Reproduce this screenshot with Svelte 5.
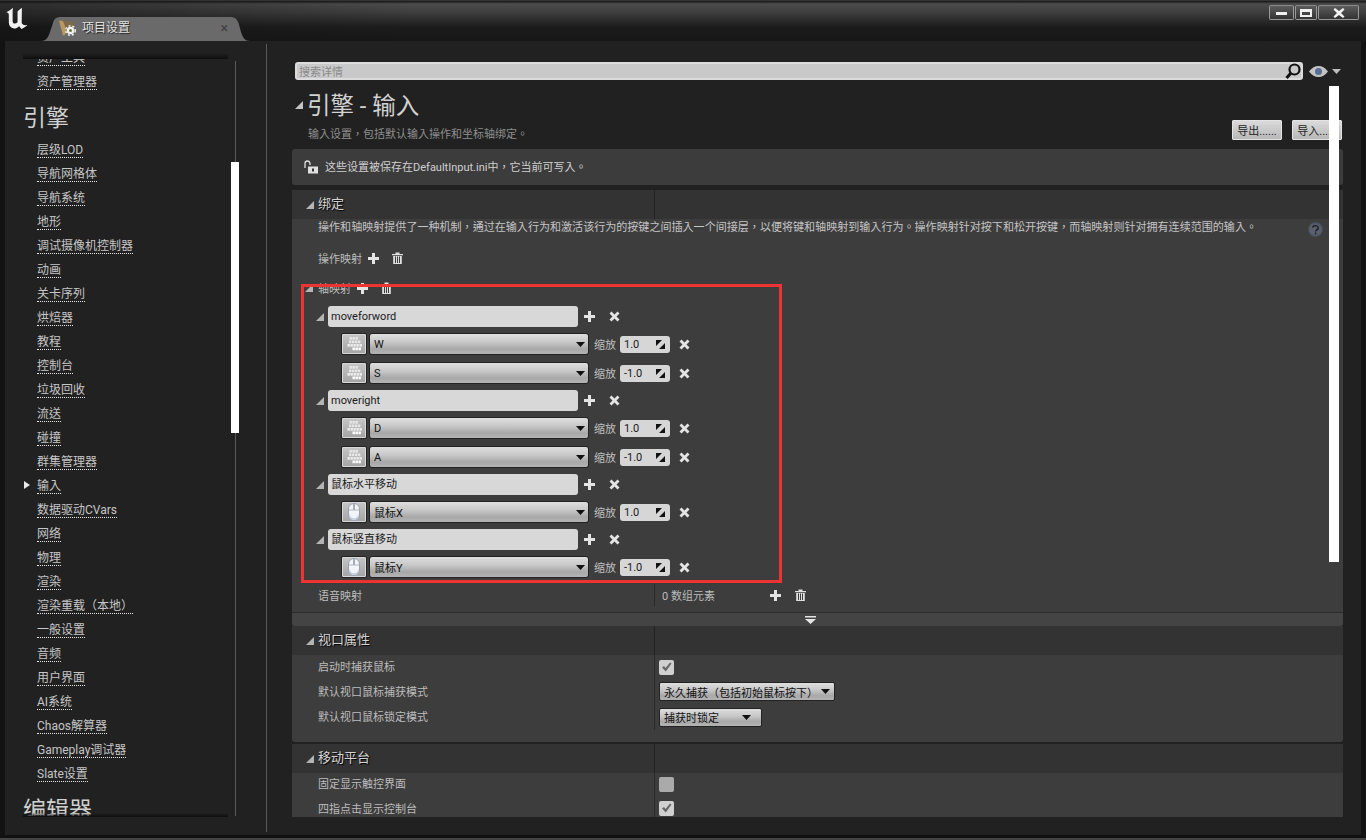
<script>
  const navItems = ['层级LOD','导航网格体','导航系统','地形','调试摄像机控制器','动画','关卡序列','烘焙器','教程','控制台','垃圾回收','流送','碰撞','群集管理器','输入','数据驱动CVars','网络','物理','渲染','渲染重载（本地）','一般设置','音频','用户界面','AI系统','Chaos解算器','Gameplay调试器','Slate设置'];
  const axes = [
    { name: 'moveforword', keys: [{ k: 'W', s: '1.0', t: 'kbd' }, { k: 'S', s: '-1.0', t: 'kbd' }] },
    { name: 'moveright', keys: [{ k: 'D', s: '1.0', t: 'kbd' }, { k: 'A', s: '-1.0', t: 'kbd' }] },
    { name: '鼠标水平移动', keys: [{ k: '鼠标X', s: '1.0', t: 'mouse' }] },
    { name: '鼠标竖直移动', keys: [{ k: '鼠标Y', s: '-1.0', t: 'mouse' }] }
  ];
  const kbdKeys = [
    [2.500,0,'#e6e6e6'],[5.500,0,'#e6e6e6'],[8.500,0,'#e6e6e6'],
    [2,3.500,'#e6e6e6'],[5,3.500,'#e6e6e6'],[8,3.500,'#e6e6e6'],[11,3.500,'#e6e6e6'],
    [0.500,7,'#ececec'],[3.500,7,'#ececec'],[6.500,7,'#ececec'],[9.500,7,'#ececec'],[12.500,7,'#ececec'],
    [5.500,10.500,'#ffffff'],[8.500,10.500,'#ffffff'],[11.500,10.500,'#ffffff']
  ];
</script>

{#snippet plus()}
  <svg class="ico" width="11" height="11" viewBox="0 0 11 11"><path d="M4 0h3v4h4v3H7v4H4V7H0V4h4z" fill="#e4e4e4"/></svg>
{/snippet}
{#snippet cross()}
  <svg class="ico" width="11" height="11" viewBox="0 0 11 11"><path d="M0.500 2.500l2-2 3 3 3-3 2 2-3 3 3 3-2 2-3-3-3 3-2-2 3-3z" fill="#e4e4e4"/></svg>
{/snippet}
{#snippet trash()}
  <svg class="ico" width="11" height="12" viewBox="0 0 11 12"><path d="M0 2h11v1.200H0zM3.500 0.500h4V2h-4zM1.200 4h8.600v8H1.200zM3 4.600v6.400h1V4.600zM5 4.600v6.400h1V4.600zM7 4.600v6.400h1V4.600z" fill="#e0e0e0" fill-rule="evenodd"/></svg>
{/snippet}
{#snippet tri()}
  <svg class="tri" width="8" height="8" viewBox="0 0 8 8"><path d="M8 0v8H0z" fill="#b4b4b4"/></svg>
{/snippet}
{#snippet arrow()}
  <svg class="arrow" width="9" height="5" viewBox="0 0 9 5"><path d="M0 0h9L4.500 5z" fill="#111"/></svg>
{/snippet}
{#snippet check(on)}
  <span class="check" class:on>
    {#if on}<svg width="11" height="10" viewBox="0 0 11 10"><path d="M1 5.500l2-1.500 1.600 2L9 0.500l1.500 1L4.800 9.500z" fill="#666"/></svg>{/if}
  </span>
{/snippet}

<div class="window">
  <header class="titlebar">
    <svg class="logo" width="24" height="24" viewBox="0 0 22 22">
      <path d="M1 5.500C3 5 4 4 7.500 1.500L7 4V14C7 16.500 9.500 16.800 11.500 15V5C12 4 14 2.500 15.500 1.500L15.300 15C15.300 17 17 18 20.500 17.500C19 19 17 20.500 15 21L13 18.500C11 20.500 9 21 7.500 20.500C5 20 3.500 18 3.500 15V8C3.500 6.500 2.500 6 1 5.500z" fill="#f2f2f2"/>
    </svg>
    <div class="tab">
      <svg class="tabshape" width="209" height="25" viewBox="0 0 209 25"><path d="M0 25C5 25 7 22 9 16L12 7C13 3 15 1 20 1H189C194 1 196 3 197.500 7L200 16C202 22 204 25 209 25z" fill="#6a6a6a"/></svg>
      <svg class="folder" width="17" height="17" viewBox="0 0 17 17">
        <path d="M0 1.500L6 1l2 2 6-1 1 9-9 4z" fill="#7d6a4a"/>
        <path d="M0 1.500l4 .5 3 8-1 6-2 .5z" fill="#b89a60"/>
        <circle cx="11.500" cy="11.500" r="3.800" fill="#f2f2f2"/>
        <circle cx="11.500" cy="11.500" r="4.800" fill="none" stroke="#f2f2f2" stroke-width="1.400" stroke-dasharray="2 2"/>
        <circle cx="11.500" cy="11.500" r="1.500" fill="#6a7a3a"/>
      </svg>
      <span class="tabtext">项目设置</span>
      <span class="tabx">×</span>
    </div>
    <div class="winbtns">
      <button class="wb min" aria-label="最小化"><i></i></button>
      <button class="wb max" aria-label="最大化"><i></i></button>
      <button class="wb close" aria-label="关闭"><svg width="12" height="10" viewBox="0 0 12 10"><path d="M0.500 1.500L2 0l4 3 4-3 1.500 1.500L8 5l3.500 3.500L10 10 6 7l-4 3-1.500-1.500L4 5z" fill="#f2f2f2"/></svg></button>
    </div>
  </header>

  <div class="body">
    <aside class="sidebar">
      <div class="navwrap">
        <nav class="nav">
          <div class="navlist">
            <div class="item"><span>资产工具</span></div>
            <div class="item"><span>资产管理器</span></div>
            <div class="heading">引擎</div>
            {#each navItems as it}
              <div class="item" class:active={it === '输入'}><span>{it}</span></div>
            {/each}
            <div class="heading">编辑器</div>
          </div>
        </nav>
        <div class="shade top"></div>
        <div class="shade bottom"></div>
      </div>
      <div class="navtrack"><div class="navthumb"></div></div>
    </aside>

    <main class="main">
      <div class="searchrow">
        <div class="search">
          <span>搜索详情</span>
          <svg width="18" height="18" viewBox="0 0 18 18"><circle cx="10.500" cy="7.500" r="5" fill="none" stroke="#111" stroke-width="2.200"/><path d="M7 11L2.500 16" stroke="#111" stroke-width="3"/></svg>
        </div>
        <svg class="eye" width="19" height="11" viewBox="0 0 19 11"><path d="M0 5.500C3 1.500 6 0 9.500 0S16 1.500 19 5.500C16 9.500 13 11 9.500 11S3 9.500 0 5.500z" fill="#c4c4c4"/><circle cx="9.500" cy="5.500" r="3.500" fill="#5a6d96"/></svg>
        <svg class="eyearrow" width="9" height="5" viewBox="0 0 9 5"><path d="M0 0h9L4.500 5z" fill="#bdbdbd"/></svg>
      </div>

      <div class="head">
        <div>
          <h1><svg width="8" height="8" viewBox="0 0 8 8"><path d="M8 0v8H0z" fill="#c4c4c4"/></svg>引擎 - 输入</h1>
          <p>输入设置，包括默认输入操作和坐标轴绑定。</p>
        </div>
        <div class="headbtns">
          <button>导出......</button>
          <button>导入......</button>
        </div>
      </div>

      <div class="banner">
        <svg width="15" height="14" viewBox="0 0 15 14"><path d="M1 8V3.500a2.500 2.500 0 0 1 5 0V5" fill="none" stroke="#e0e0e0" stroke-width="1.300"/><rect x="4" y="6.500" width="10" height="7" fill="#e0e0e0"/><rect x="8" y="8.500" width="2" height="3" fill="#333"/></svg>
        <span>这些设置被保存在DefaultInput.ini中，它当前可写入。</span>
      </div>

      <div class="scroller">
        <section class="panel bind">
          <div class="sechead"><div class="secname">{@render tri()}<span>绑定</span></div><div class="secright"></div></div>
          <div class="desc">
            <span>操作和轴映射提供了一种机制，通过在输入行为和激活该行为的按键之间插入一个间接层，以便将键和轴映射到输入行为。操作映射针对按下和松开按键，而轴映射则针对拥有连续范围的输入。</span>
            <svg class="help" width="15" height="15" viewBox="0 0 15 15"><circle cx="7.500" cy="7.500" r="6.500" fill="#59616e" stroke="#4d5766" stroke-width="1.500"/><path d="M4.800 5.800a2.700 2.300 0 1 1 3.800 2.200c-.7.400-1 .8-1 1.600M7.600 10.600v1.600" fill="none" stroke="#1c1c1c" stroke-width="1.400"/></svg>
          </div>
          <div class="maprow action"><span>操作映射</span>{@render plus()}{@render trash()}</div>
          <div class="maprow axis">{@render tri()}<span>轴映射</span>{@render plus()}{@render trash()}</div>
          <div class="tree">
            {#each axes as a}
              <div class="axisrow">
                {@render tri()}
                <div class="pill">{a.name}</div>
                {@render plus()}
                {@render cross()}
              </div>
              {#each a.keys as key}
                <div class="keyrow">
                  <button class="keybtn" aria-label="按键类型">
                    {#if key.t === 'kbd'}
                      <svg width="15" height="14" viewBox="0 0 15 14">
                        {#each kbdKeys as p}<rect x={p[0]} y={p[1]} width="2.400" height="2.700" fill={p[2]}/>{/each}
                      </svg>
                    {:else}
                      <svg width="12" height="18" viewBox="0 0 12 18"><rect x="0.500" y="0.500" width="11" height="17" rx="5.500" fill="#f2f4f8" stroke="#9aa2b2"/><path d="M1 7h10" stroke="#b4b8c2"/><path d="M6 1v6" stroke="#a7adb8" stroke-width="2"/><path d="M1 11c2 6 8 6 10 0v2c-2 5-8 5-10 0z" fill="#b8c4dc"/></svg>
                    {/if}
                  </button>
                  <div class="combo"><span>{key.k}</span>{@render arrow()}</div>
                  <span class="scale">缩放</span>
                  <div class="num">
                    <span>{key.s}</span>
                    <svg width="9" height="9" viewBox="0 0 9 9"><path d="M0 0h6L0 6zM9 9H3l6-6z" fill="#111"/></svg>
                  </div>
                  {@render cross()}
                </div>
              {/each}
            {/each}
          </div>
          <div class="voicerow">
            <div class="vleft">语音映射</div>
            <div class="vright"><span>0 数组元素</span>{@render plus()}{@render trash()}</div>
          </div>
          <div class="strip">
            <svg width="11" height="8" viewBox="0 0 11 8"><path d="M0 0h11v1.500H0zM0 3h11L5.500 8z" fill="#e4e4e4"/></svg>
          </div>
          <div class="redbox"></div>
        </section>

        <section class="panel viewport">
          <div class="sechead"><div class="secname">{@render tri()}<span>视口属性</span></div><div class="secright"></div></div>
          <div class="prop p1"><div class="pl">启动时捕获鼠标</div><div class="pr">{@render check(true)}</div></div>
          <div class="prop p2"><div class="pl">默认视口鼠标捕获模式</div><div class="pr"><div class="sel wide"><span>永久捕获（包括初始鼠标按下）</span>{@render arrow()}</div></div></div>
          <div class="prop p3"><div class="pl">默认视口鼠标锁定模式</div><div class="pr"><div class="sel narrow"><span>捕获时锁定</span>{@render arrow()}</div></div></div>
        </section>

        <section class="panel mobile">
          <div class="sechead"><div class="secname">{@render tri()}<span>移动平台</span></div><div class="secright"></div></div>
          <div class="prop m1"><div class="pl">固定显示触控界面</div><div class="pr">{@render check(false)}</div></div>
          <div class="prop m2"><div class="pl">四指点击显示控制台</div><div class="pr">{@render check(true)}</div></div>
        </section>
      </div>
      <div class="mainthumb"></div>
    </main>
  </div>
  <div class="footer"></div>
</div>

<style>
  :global(body) { margin: 0; background: #111; }
  .window {
    width: 1366px; height: 840px; display: flex; flex-direction: column; overflow: hidden;
    background: #121212;
    font: 11px Roboto, "Noto Sans CJK SC", sans-serif; color: #c4c4c4;
    text-spacing-trim: space-all;
  }
  .titlebar {
    height: 41px; flex: none; position: relative; box-sizing: border-box; padding: 5px 0 0 5px;
    border-top: 1px solid #333;
    background: linear-gradient(to right, rgba(18,18,18,.55), rgba(18,18,18,0) 30%), linear-gradient(to bottom, #151515 0, #4c4c4c 3px, #3c3c3c 12px, #1c1c1c 26px, #161616 100%);
    display: flex;
  }
  .logo { display: block; }
  .tab {
    position: absolute; left: 41px; bottom: 0; width: 209px; height: 25px;
    display: flex; align-items: center;
  }
  .tabshape { position: absolute; inset: 0; }
  .folder { position: relative; margin: 0 0 2px 18px; }
  .tabtext { position: relative; margin: 0 0 4px 6px; font-size: 12px; color: #e0e0e0; text-shadow: 1px 1px 1px #222; }
  .tabx { position: relative; margin: 0 22px 2px auto; color: #3e3e3e; font-size: 14px; }
  .winbtns { position: absolute; right: 7px; top: 4px; display: flex; gap: 1px; }
  .wb {
    height: 15px; padding: 0; box-sizing: border-box; display: flex; align-items: center; justify-content: center;
    background: linear-gradient(to bottom, #5c5c5c, #333); border: 1px solid #9a9a9a; border-top-color: #888; border-radius: 2px;
  }
  .min { width: 25px; }
  .max { width: 22px; }
  .close { width: 41px; }
  .min i { width: 11px; height: 3px; margin-top: 2px; background: #f0f0f0; display: block; }
  .max i { width: 8px; height: 3px; border: 2px solid #f0f0f0; border-top-width: 3px; display: block; }
  .body { flex: 1; min-height: 0; margin: 0 5px; background: #212121; display: flex; }
  .footer { height: 5px; flex: none; border-bottom: 2px solid #444; box-sizing: border-box; background: #111; }

  .sidebar {
    width: 261px; flex: none; box-sizing: border-box; position: relative;
    padding-top: 18px; display: flex;
    font-family: Roboto, "Noto Sans CJK TC", sans-serif;
  }
  .sidebar::after { content: ''; position: absolute; left: 261px; top: 3px; bottom: 3px; width: 1px; background: #5a5a5a; }
  .navwrap { width: 226px; height: 757px; position: relative; flex: none; }
  .nav { height: 100%; overflow: hidden; }
  .navlist { margin-top: -14px; padding-left: 32px; }
  .item { height: 24px; line-height: 24px; font-size: 12px; color: #c6c6c6; position: relative; white-space: nowrap; }
  .item span { display: inline-block; line-height: 14px; border-bottom: 1px dotted #e8e8e8; vertical-align: middle; margin-top: 2px; }
  .item.active::before {
    content: ''; position: absolute; left: -13px; top: 8px;
    border-left: 6px solid #e8e8e8; border-top: 4px solid transparent; border-bottom: 4px solid transparent;
  }
  .heading { height: 32px; line-height: 32px; margin: 10px 0 2px -14px; font-size: 23px; color: #d0d0d0; }
  .shade { position: absolute; left: 18px; right: 3px; }
  .shade.top { top: -6px; height: 6px; background: linear-gradient(to top, #0e0e0e, rgba(33,33,33,0)); }
  .shade.bottom { bottom: -1px; height: 4px; background: linear-gradient(to top, #0e0e0e, rgba(33,33,33,0)); }
  .navtrack { width: 1px; height: 755px; margin: 2px 0 0 4px; background: #5a5a5a; position: relative; }
  .navthumb { position: absolute; left: -4px; top: 101px; width: 8px; height: 271px; background: #fff; }

  .main { flex: 1; min-width: 0; position: relative; padding: 21px 18px 0 26px; box-sizing: border-box; }
  .searchrow { height: 18px; display: flex; align-items: center; padding-left: 3px; }
  .search {
    width: 1008px; height: 18px; box-sizing: border-box; flex: none;
    background: #c9c9c9; border: 2px solid #dcdcdc; border-radius: 3px;
    display: flex; align-items: center; justify-content: space-between; color: #8a8a8a; font-size: 11px; padding-left: 2px;
  }
  .search svg { margin-right: -1px; }
  .eye { margin-left: 6px; }
  .eyearrow { margin-left: 4px; }
  .head { height: 69px; display: flex; justify-content: space-between; }
  h1 { margin: 11px 0 0 3px; height: 30px; line-height: 30px; font-size: 23.500px; font-weight: 400; color: #d2d2d2; display: flex; align-items: center; gap: 4px; }
  h1 svg { margin-bottom: 2px; }
  .head p { margin: 6px 0 0 16px; font-size: 11px; line-height: 16px; color: #8e8e8e; font-family: Roboto, "Noto Sans CJK TC", sans-serif; }
  .headbtns { display: flex; gap: 10px; padding-top: 40px; margin-right: 1px; }
  .headbtns button {
    width: 50px; height: 20px; padding: 0; font: 11px Roboto, "Noto Sans CJK SC", sans-serif; color: #222; overflow: hidden; white-space: nowrap;
    background: linear-gradient(to bottom, #dadada, #b8b8b8); border: 1px solid #e4e4e4; border-radius: 1px;
  }
  .banner {
    height: 36px; display: flex; align-items: center; gap: 6px; padding-left: 12px; box-sizing: border-box;
    background: #3c3c3c; border-radius: 3px; font-size: 11px; color: #d0d0d0;
    font-family: Roboto, "Noto Sans CJK TC", sans-serif;
  }
  .banner span { margin-bottom: 2px; }
  .scroller { margin-top: 5px; height: 627px; overflow: hidden; }
  .panel { background: #3d3d3d; border-radius: 3px; position: relative; }
  .sechead { display: grid; grid-template-columns: 362px 1fr; background: #333; height: 29px; }
  .secname { display: flex; align-items: center; padding: 0 0 0 14px; font-size: 13px; color: #d4d4d4; text-shadow: 1px 1px 1px #000; }
  .secname span { margin: 0 0 4px 4px; }
  .secright { border-left: 1px solid #222; }
  .tri { flex: none; display: block; }
  .ico { flex: none; display: block; }
  .arrow { flex: none; display: block; }
  .desc { height: 21px; padding: 0 20px 0 26px; display: flex; justify-content: space-between; font-size: 11.050px; line-height: 17px; color: #c4c4c4; white-space: nowrap; font-family: Roboto, "Noto Sans CJK TC", sans-serif; }
  .help { margin-top: 3px; }
  .maprow { height: 24px; display: flex; align-items: center; margin-top: 6px; color: #bcbcbc; }
  .action { padding-left: 26px; }
  .action .ico:nth-of-type(1) { margin-left: 6px; }
  .action .ico:nth-of-type(2) { margin-left: 13px; }
  .axis { padding-left: 13px; }
  .axis > span { margin-left: 5px; }
  .axis .ico:nth-of-type(2) { margin-left: 6px; }
  .axis .ico:nth-of-type(3) { margin-left: 13px; }
  .tree { display: flex; flex-direction: column; gap: 6px; margin-top: 6px; }
  .axisrow { height: 21px; display: flex; align-items: center; padding-left: 24px; }
  .axisrow .pill { margin-left: 4px; margin-right: 6px; }
  .axisrow .ico:last-child { margin-left: 14px; }
  .pill {
    width: 250px; height: 21px; line-height: 21px; flex: none; box-sizing: border-box; padding-left: 3px;
    background: #d8d8d8; border-radius: 3px; color: #1a1a1a; font-size: 11px;
  }
  .keyrow { height: 22px; display: flex; align-items: center; padding-left: 49px; }
  .keyrow + .keyrow { margin-top: 1px; }
  .keybtn {
    width: 26px; height: 22px; padding: 0; flex: none; box-sizing: border-box;
    display: flex; align-items: center; justify-content: center;
    background: linear-gradient(to bottom, #c6c6c6, #a4a4a4); border: 1px solid #222; border-radius: 2px;
    box-shadow: inset 0 0 0 1px #d8d8d8;
  }
  .combo {
    width: 220px; height: 22px; margin-left: 2px; flex: none; box-sizing: border-box; padding: 0 3px 0 4px;
    display: flex; align-items: center; justify-content: space-between;
    background: linear-gradient(to bottom, #dedede, #c8c8c8 40%, #a8a8a8 75%, #b4b4b4);
    border: 1px solid #222; border-radius: 3px; color: #111; font-size: 11px;
  }
  .scale { margin-left: 5px; width: 21px; flex: none; color: #c0c0c0; font-size: 11px; white-space: nowrap; }
  .num {
    width: 50px; height: 17px; margin-left: 5px; margin-right: 9px; flex: none; box-sizing: border-box; padding: 0 5px 0 4px;
    display: flex; align-items: center; justify-content: space-between;
    background: #d6d6d6; border-radius: 3px; color: #1a1a1a; font-size: 11px;
  }
  .voicerow { display: grid; grid-template-columns: 362px 1fr; height: 22px; margin-top: 6px; align-items: stretch; }
  .vleft { padding: 2px 0 0 26px; line-height: 22px; height: 20px; color: #bcbcbc; }
  .vright { border-left: 1px solid #2a2a2a; padding-left: 7px; display: flex; align-items: center; color: #bcbcbc; }
  .vright .ico:nth-of-type(1) { margin-left: 55px; }
  .vright .ico:nth-of-type(2) { margin-left: 14px; }
  .strip {
    margin-top: 6px; height: 14px; box-sizing: border-box; border-top: 1px solid #2c2c2c;
    display: flex; justify-content: center; align-items: center; background: #444; padding-right: 15px;
    border-radius: 0 0 3px 3px;
  }
  .redbox {
    position: absolute; left: 9px; top: 94px; width: 481px; height: 299px; box-sizing: border-box;
    border: 3px solid #ee3333; pointer-events: none;
  }
  .viewport { padding-bottom: 12px; margin-bottom: 2px; }
  .prop { display: grid; grid-template-columns: 362px 1fr; align-items: stretch; }
  .p1 { height: 24px; } .p2 { height: 25px; } .p3 { height: 26px; }
  .m1 { height: 23px; } .m2 { height: 24px; }
  .pl { padding: 0 0 2px 26px; display: flex; align-items: center; color: #bcbcbc; font-size: 11px; }
  .m1 .pl { padding-bottom: 4px; }
  .m2 .pl { padding-bottom: 0; }
  .pr { border-left: 1px solid #2a2a2a; padding-left: 4px; display: flex; align-items: center; }
  .check {
    width: 15px; height: 15px; box-sizing: border-box; border-radius: 2px; background: #aaa;
    display: flex; align-items: center; justify-content: center;
  }
  .check.on { background: #d0d0d0; }
  .sel {
    height: 19px; box-sizing: border-box; display: flex; align-items: center; justify-content: space-between; padding: 0 4px 0 4px;
    background: linear-gradient(to bottom, #dedede, #c8c8c8 40%, #a8a8a8 75%, #b4b4b4);
    border: 1px solid #222; border-radius: 2px; color: #111; font-size: 11px; white-space: nowrap;
    font-family: Roboto, "Noto Sans CJK TC", sans-serif;
  }
  .sel.wide { width: 176px; }
  .sel.narrow { width: 103px; }
  .sel.narrow .arrow { margin-right: 6px; }
  .mainthumb { position: absolute; left: 1063px; top: 45px; width: 10px; height: 476px; background: #fff; }
</style>
